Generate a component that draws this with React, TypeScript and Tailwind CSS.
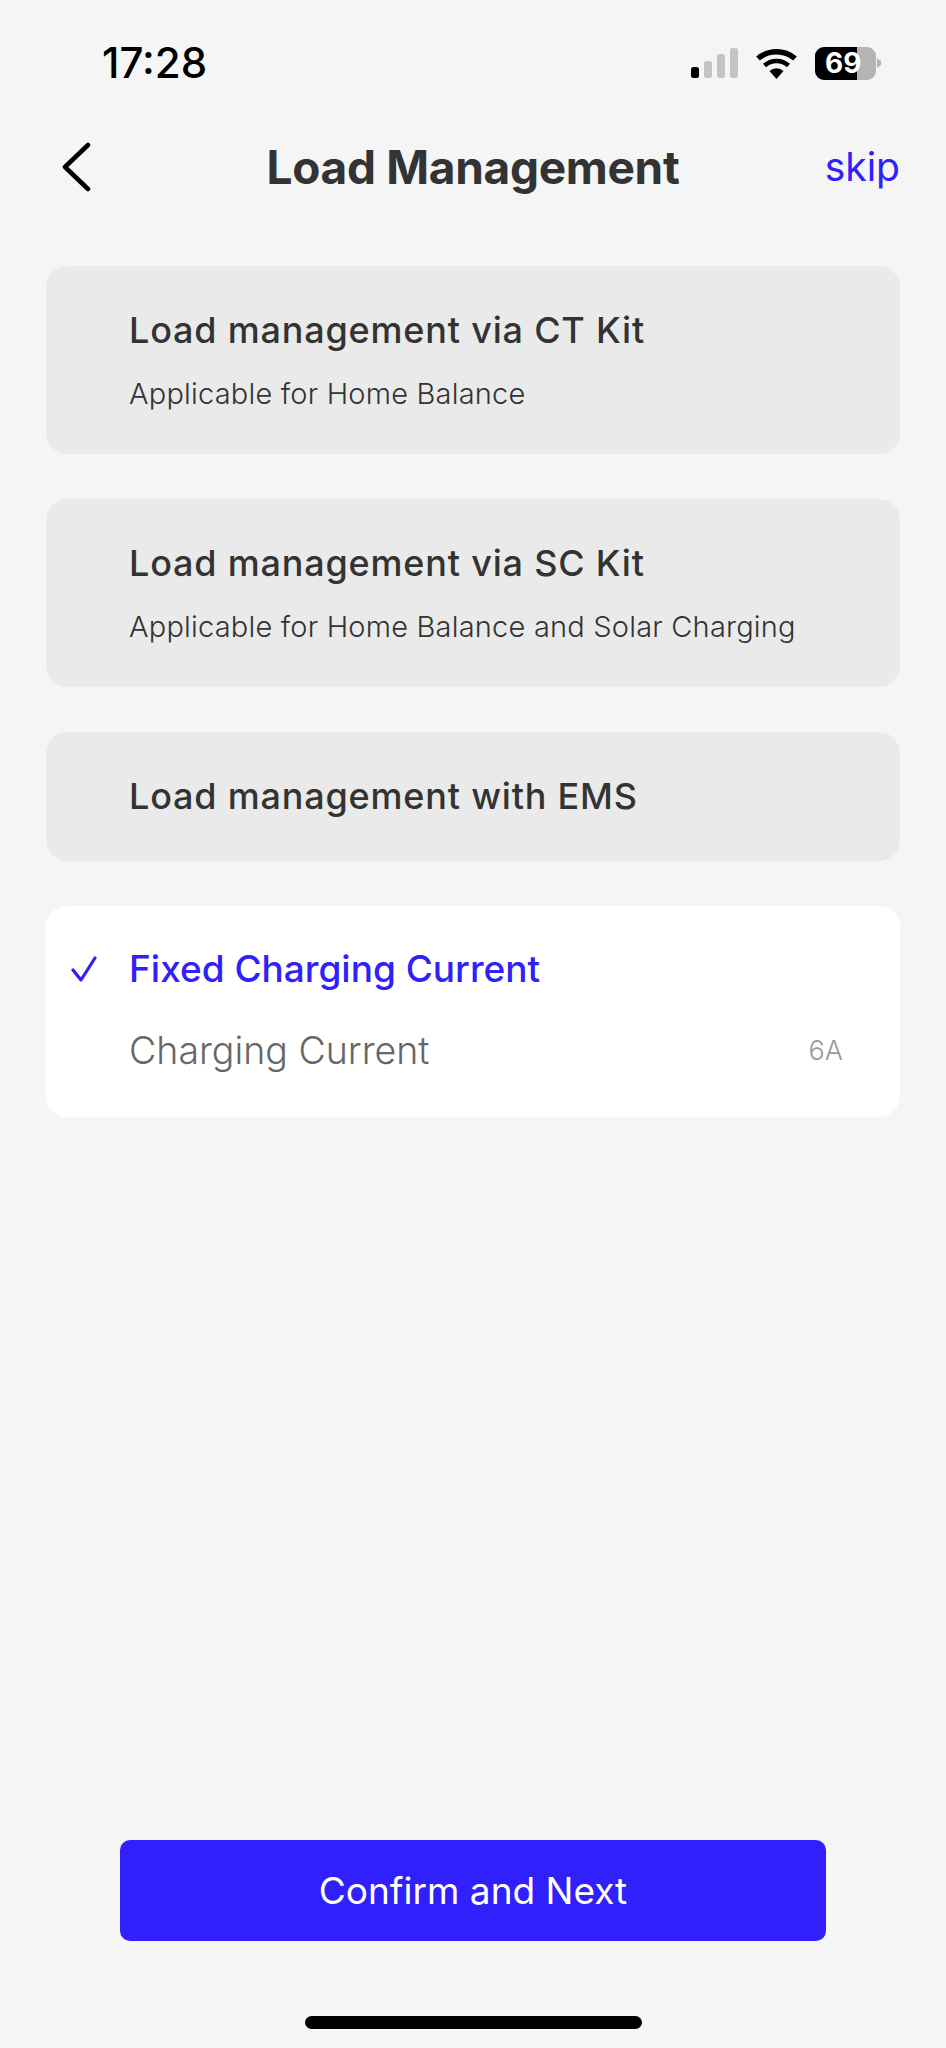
const font = { fontFamily: "Inter, sans-serif" };

function StatusIcons() {
  return (
    <div className="flex items-center">
      <svg width="47" height="30" viewBox="0 0 47 30" className="mr-[18px]">
        <rect x="0" y="19" width="8" height="11" rx="2.5" fill="#000" />
        <rect x="13" y="13" width="8" height="17" rx="2.5" fill="#c4c4c4" />
        <rect x="26" y="6" width="8" height="24" rx="2.5" fill="#c4c4c4" />
        <rect x="39" y="0" width="8" height="30" rx="2.5" fill="#c4c4c4" />
      </svg>
      <svg width="41" height="31" viewBox="0 0 41 31" className="mr-[18px]">
        <path d="M20.5 31l-7-8a10.5 10.5 0 0 1 14 0z" fill="#000" />
        <path d="M8.5 17.5a18 18 0 0 1 24 0" fill="none" stroke="#000" strokeWidth="4.5" />
        <path d="M2 10.5a28.5 28.5 0 0 1 37 0" fill="none" stroke="#000" strokeWidth="5.5" />
      </svg>
      <div className="relative h-[33px] w-[61px] overflow-hidden rounded-[9px] bg-[#b4b4b4]">
        <div className="h-full w-[42px] bg-black" />
        <span className="absolute inset-y-0 left-[10px] flex items-center text-[28px] font-bold leading-none text-white">
          69
        </span>
      </div>
      <svg width="5" height="10" viewBox="0 0 5 10" className="ml-px">
        <path d="M0 0l4 3v4l-4 3z" fill="#b4b4b4" />
      </svg>
    </div>
  );
}

function Option({ title, desc }: { title: string; desc?: string }) {
  return (
    <div className="rounded-[21px] bg-[#eaeaea] px-[83px] py-[41px]">
      <p className="text-[36px] leading-[47px] font-medium tracking-[0.8px] text-[#333333]">{title}</p>
      {desc && <p className="mt-[21px] text-[29px] leading-[38px] font-light tracking-[0.2px] text-[#333333]">{desc}</p>}
    </div>
  );
}

export default function App() {
  return (
    <div style={font} className="flex h-[2048px] w-[946px] flex-col bg-[#f5f5f5]">
      <div className="flex items-center justify-between pt-[39px] pr-[64px] pl-[102px]">
        <span className="text-[42px] leading-[48px] font-medium text-black">17:28</span>
        <StatusIcons />
      </div>

      <div className="mt-[44px] grid h-[72px] grid-cols-[1fr_auto_1fr] items-center pr-[46px] pl-[60px]">
        <svg width="32" height="50" viewBox="0 0 32 50" fill="none">
          <path d="M28 3L5 25l23 22" stroke="#000" strokeWidth="4.5" strokeLinecap="round" strokeLinejoin="round" />
        </svg>
        <h1 className="-ml-[14px] text-[46px] font-bold tracking-[-0.3px] text-[#333333]">Load Management</h1>
        <span className="text-right text-[39px] text-[#3020fb]">skip</span>
      </div>

      <div className="mt-[63px] flex flex-col gap-[45px] px-[46px]">
        <Option title="Load management via CT Kit" desc="Applicable for Home Balance" />
        <Option title="Load management via SC Kit" desc="Applicable for Home Balance and Solar Charging" />
        <Option title="Load management with EMS" />

        <div className="rounded-[21px] bg-white pt-[39px] pr-[57px] pb-[42px] pl-[25px]">
          <div className="flex items-center">
            <svg width="26" height="26" viewBox="0 0 26 26" fill="none" className="mr-[32px]">
              <path d="M2 14l8 10L24 2" stroke="#3020fb" strokeWidth="3.2" strokeLinejoin="round" strokeLinecap="round" />
            </svg>
            <span className="text-[37px] leading-[48px] font-medium text-[#3020fb]">Fixed Charging Current</span>
          </div>
          <div className="mt-[34px] flex items-center justify-between pl-[58px]">
            <span className="text-[37.5px] leading-[48px] font-light text-[#666666]">Charging Current</span>
            <span className="text-[27px] font-light text-[#999999]">6A</span>
          </div>
        </div>
      </div>

      <div className="mt-auto flex flex-col items-center pb-[19px]">
        <button className="h-[101px] w-[706px] rounded-[10px] bg-[#3020fb] text-[37px] font-normal text-white">
          Confirm and Next
        </button>
        <div className="mt-[75px] h-[13px] w-[337px] rounded-full bg-black" />
      </div>
    </div>
  );
}
